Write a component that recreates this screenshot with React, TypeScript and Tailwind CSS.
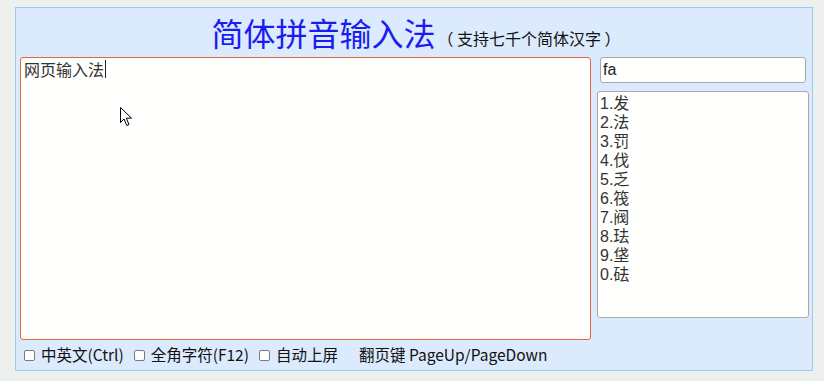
import React from "react";

const cjk = '"Noto Sans CJK SC", "Noto Sans", sans-serif';
const arialCjk = '"Liberation Sans", "Noto Sans CJK SC", sans-serif';

function Check({ label }: { label: string }) {
  return (
    <span className="flex items-center">
      <span className="inline-block w-[11px] h-[11px] border border-[#7a7a7a] rounded-[2px] bg-white mr-[6px]" />
      <span>{label}</span>
    </span>
  );
}

export default function App() {
  const cands = ["1.发", "2.法", "3.罚", "4.伐", "5.乏", "6.筏", "7.阀", "8.珐", "9.垡", "0.砝"];
  return (
    <div className="w-[824px] h-[381px] bg-[#eef0ed] pt-[7px] pl-[15px] overflow-hidden" style={{ fontFamily: cjk }}>
      <div className="w-[798px] h-[364px] border border-[#9ccbf6] bg-[#dbeafc] flex flex-col relative">
        {/* header */}
        <div className="h-[49px] flex items-end justify-center pb-[6px] pl-[4px]">
          <span className="text-[32px] leading-[38px] text-[#1c1cf0]">简体拼音输入法</span>
          <span className="text-[16px] leading-[24px] text-[#111] ml-[2px] mb-[1px]">（ 支持七千个简体汉字 ）</span>
        </div>
        {/* main */}
        <div className="flex h-[283px]">
          <div className="ml-[4px] w-[571px] h-[283px] border border-[#e0673a] rounded-[3px] bg-[#fffffd] px-[3px] pt-[1px]">
            <div className="text-[16px] leading-[20px] text-[#333] flex items-center" style={{ fontFamily: cjk }}>
              <span>网页输入法</span>
              <span className="inline-block w-px h-[18px] bg-[#222] ml-[1px]" />
            </div>
          </div>
          <div className="ml-[6px] flex flex-col">
            <div className="ml-[3px] w-[206px] h-[26px] border border-[#a9a9a9] rounded-[3px] bg-[#fffffd] px-[2px] flex items-center text-[16px] text-[#222]" style={{ fontFamily: arialCjk }}>
              fa
            </div>
            <div className="mt-[8px] w-[212px] h-[227px] border border-[#a9a9a9] rounded-[3px] bg-[#fffffd] pl-[2px] pt-[2px] text-[16px] leading-[19px] text-[#333]" style={{ fontFamily: arialCjk }}>
              {cands.map((c) => (
                <div key={c}>{c}</div>
              ))}
            </div>
          </div>
        </div>
        {/* bottom */}
        <div className="flex-1 flex items-center pl-[8px] text-[15.5px] text-[#111] whitespace-pre">
          <Check label="中英文(Ctrl)" />
          <span className="w-[10px]" />
          <Check label="全角字符(F12)" />
          <span className="w-[10px]" />
          <Check label="自动上屏" />
          <span className="w-[21px]" />
          <span>翻页键 PageUp/PageDown</span>
        </div>
        {/* mouse pointer */}
        <svg className="absolute left-[104px] top-[99px]" width="13" height="20" viewBox="0 0 13 20">
          <path d="M0.5 0.5 L0.5 15.5 L4 12 L6.8 18.5 L9 17.5 L6.3 11.2 L11.5 11.2 Z" fill="#fff" stroke="#000" strokeWidth="1" strokeLinejoin="miter" />
        </svg>
      </div>
    </div>
  );
}
